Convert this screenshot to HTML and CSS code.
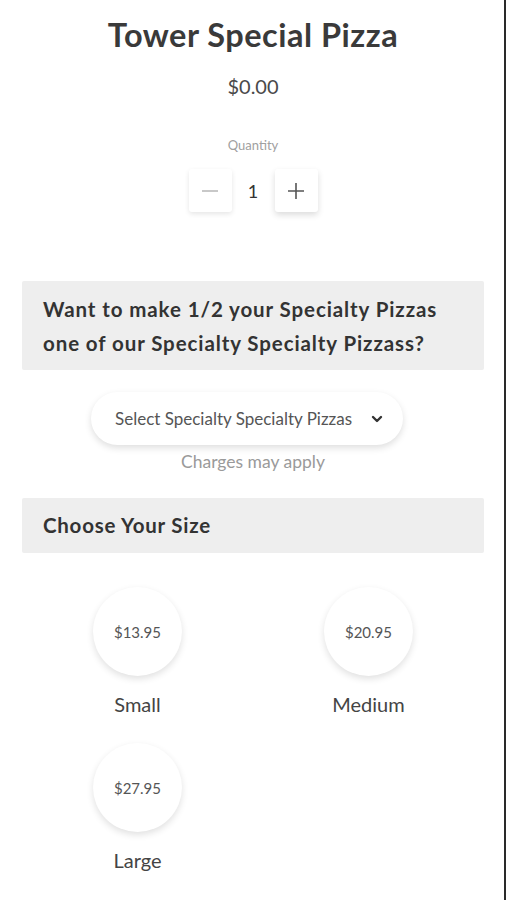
FILE: index.html
```html
<!DOCTYPE html>
<html lang="en">
<head>
<meta charset="utf-8">
<title>Tower Special Pizza</title>
<link rel="stylesheet" href="styles.css">
</head>
<body>
<div class="page">
  <h1 class="title">Tower Special Pizza</h1>
  <div class="price">$0.00</div>
  <div class="qty-label">Quantity</div>
  <div class="qty">
    <button class="qty-btn minus" aria-label="Decrease">
      <svg width="18" height="18" viewBox="0 0 18 18"><path d="M1 9h16" stroke="#bbb" stroke-width="1.6" fill="none"/></svg>
    </button>
    <span class="qty-value">1</span>
    <button class="qty-btn plus" aria-label="Increase">
      <svg width="18" height="18" viewBox="0 0 18 18"><path d="M1 9h16M9 1v16" stroke="#555" stroke-width="1.6" fill="none"/></svg>
    </button>
  </div>

  <div class="section-head">Want to make 1/2 your Specialty Pizzas one of our Specialty Specialty Pizzass?</div>

  <div class="select">
    <span>Select Specialty Specialty Pizzas</span>
    <svg class="chev" width="12" height="8" viewBox="0 0 12 8"><path d="M2 2l4 4 4-4" stroke="#333" stroke-width="2.4" fill="none" stroke-linecap="round" stroke-linejoin="round"/></svg>
  </div>
  <div class="note">Charges may apply</div>

  <div class="section-head single">Choose Your Size</div>

  <div class="sizes">
    <div class="size">
      <div class="circle">$13.95</div>
      <div class="size-name">Small</div>
    </div>
    <div class="size">
      <div class="circle">$20.95</div>
      <div class="size-name">Medium</div>
    </div>
    <div class="size">
      <div class="circle">$27.95</div>
      <div class="size-name">Large</div>
    </div>
  </div>
</div>
</body>
</html>
```

FILE: styles.css
```css
* { box-sizing: border-box; }
html, body { margin: 0; padding: 0; background: #fff; }
body { font-family: Lato, "Noto Sans", sans-serif; color: #3b3b3b; }

.page {
  width: 506px;
  min-height: 900px;
  border-right: 2px solid #2a2a2a;
  display: flex;
  flex-direction: column;
  align-items: center;
  padding: 0 20px 0 22px;
}

.title {
  margin: 15px 0 0;
  font-size: 32.5px;
  line-height: 40px;
  font-weight: 700;
  color: #3a3a3a;
  letter-spacing: 0.5px;
}

.price {
  margin-top: 19px;
  font-size: 20px;
  line-height: 24px;
  color: #4a4a4a;
}

.qty-label {
  margin-top: 39px;
  font-size: 13px;
  line-height: 16px;
  color: #a0a0a0;
}

.qty {
  margin-top: 16px;
  display: flex;
  align-items: center;
}

.qty-btn {
  width: 43px;
  height: 43px;
  border: none;
  background: #fff;
  border-radius: 3px;
  box-shadow: 0 2px 5px rgba(0,0,0,0.10);
  display: flex;
  align-items: center;
  justify-content: center;
  padding: 0;
}
.qty-btn.plus { box-shadow: 0 3px 6px rgba(0,0,0,0.14); }

.qty-value {
  width: 43px;
  text-align: center;
  font-size: 18px;
  color: #333;
}

.section-head {
  align-self: stretch;
  margin-top: 69px;
  background: #eeeeee;
  border-radius: 2px;
  padding: 11px 21px 10px;
  font-size: 20.5px;
  line-height: 34px;
  font-weight: 700;
  color: #333;
  letter-spacing: 0.9px;
}

.select {
  margin: 22px 12px 0 0;
  width: 312px;
  height: 53px;
  border-radius: 27px;
  background: #fff;
  box-shadow: 0 3px 7px rgba(0,0,0,0.13);
  display: flex;
  align-items: center;
  padding: 0 20px 0 24px;
  font-size: 17px;
  color: #555;
}
.select span { flex: 1; }
.chev { margin-top: 1px; }

.note {
  margin-top: 7px;
  font-size: 17.5px;
  line-height: 20px;
  color: #9a9a9a;
}

.section-head.single {
  margin-top: 26px;
  padding: 10px 21px 11px;
  letter-spacing: 0.75px;
}

.sizes {
  align-self: stretch;
  display: grid;
  grid-template-columns: 1fr 1fr;
  row-gap: 26px;
  margin-top: 34px;
}

.size {
  display: flex;
  flex-direction: column;
  align-items: center;
}

.circle {
  width: 89px;
  height: 89px;
  border-radius: 50%;
  background: #fff;
  box-shadow: 0 3px 7px rgba(0,0,0,0.12);
  display: flex;
  align-items: center;
  justify-content: center;
  font-size: 15px;
  color: #555;
}

.size-name {
  margin-top: 15px;
  font-size: 20px;
  line-height: 26px;
  color: #444;
}
```
